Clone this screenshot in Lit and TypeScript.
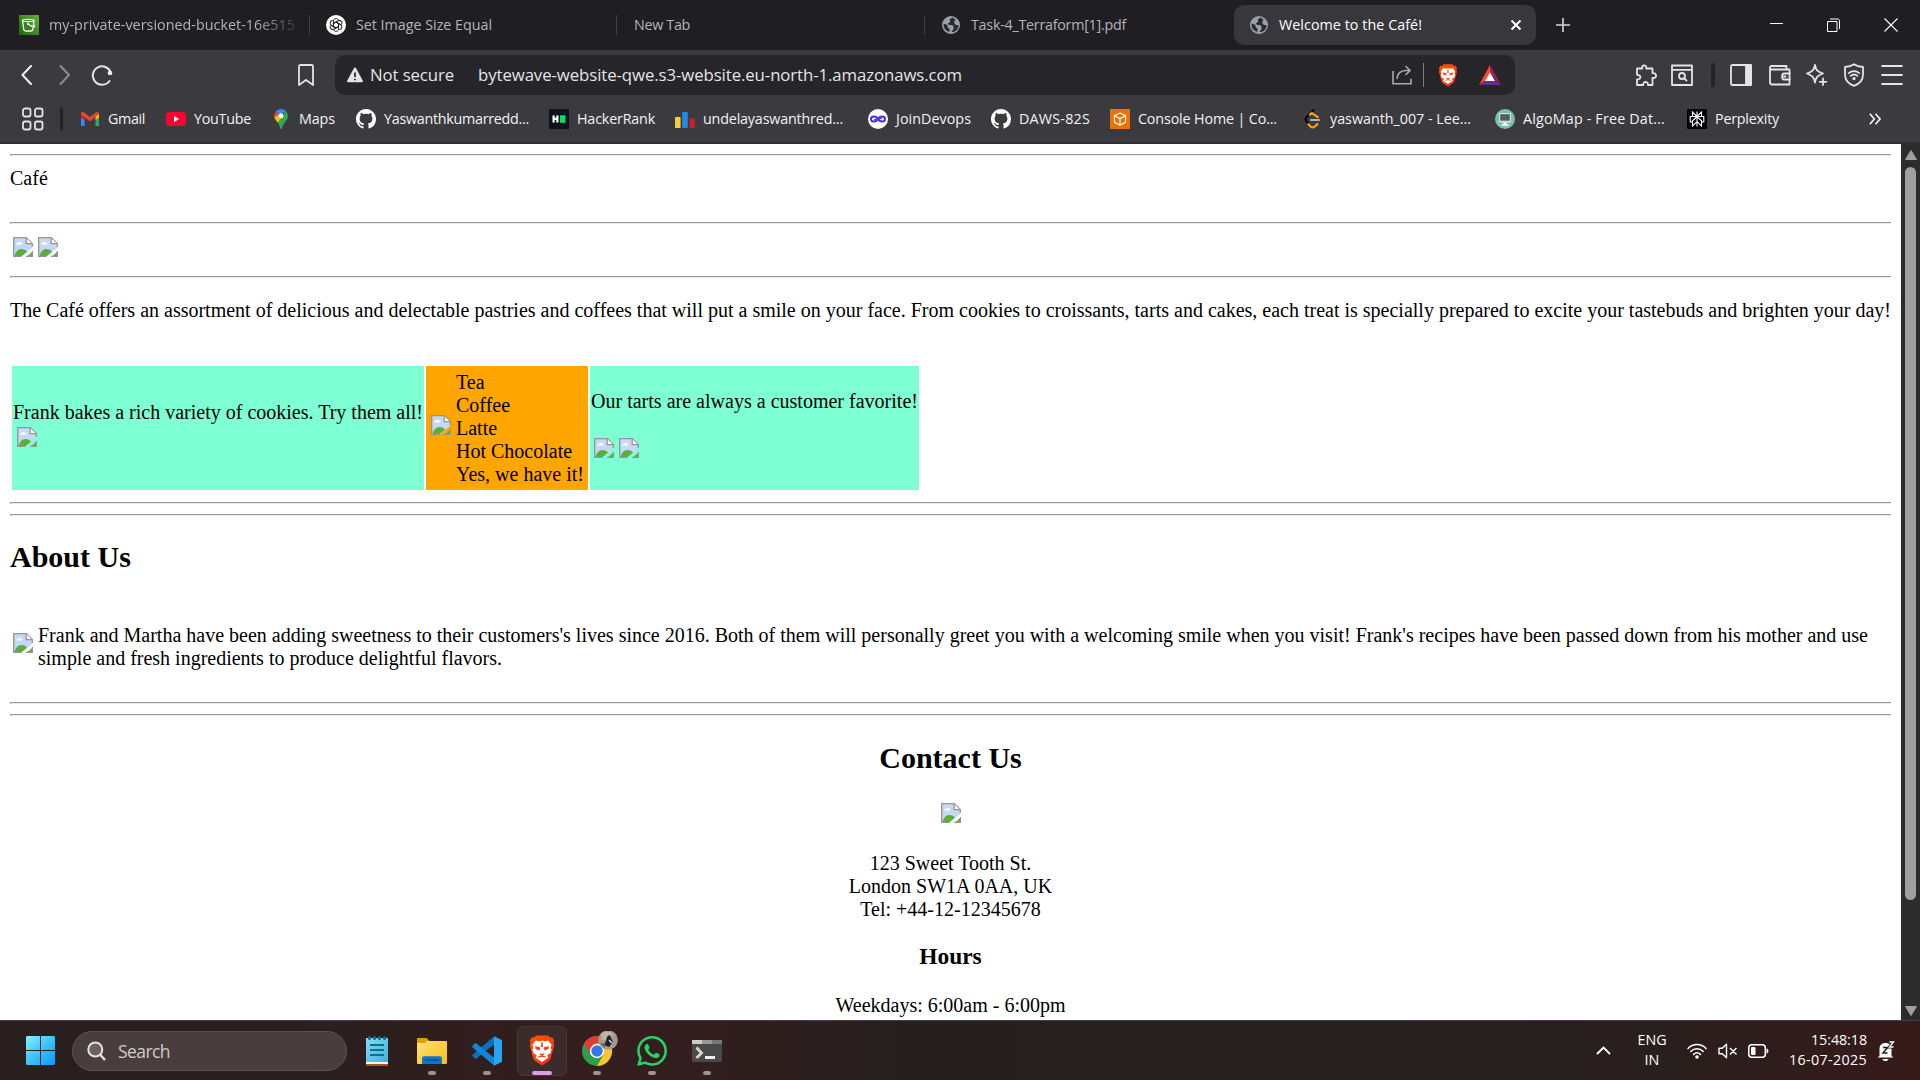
import { LitElement, html, css, svg } from "lit";
import { customElement, property } from "lit/decorators.js";

/** A single line of text tracked so that it fills an exact width. */
@customElement("fit-text")
class FitText extends LitElement {
  @property({ type: Number }) w = 0;
  @property() text = "";
  static styles = css`
    :host { display: block; white-space: pre; flex: none; }
    span { display: inline-block; }
  `;
  render() {
    return html`<span>${this.text}</span>`;
  }
  firstUpdated() {
    const span = this.renderRoot.querySelector("span") as HTMLElement;
    const natural = span.getBoundingClientRect().width;
    span.style.letterSpacing = `${(this.w - natural) / this.text.length}px`;
  }
}

const t = (text: string, w: number) => html`<fit-text .text=${text} .w=${w}></fit-text>`;
const ic = (w: number, h: number, box: string, body: unknown) =>
  html`<svg width=${w} height=${h} viewBox=${box} fill="none">${body}</svg>`;

const LION = svg`
  <path d="M5 2.6 7 .4h12l2 2.2 2.4-.2 1.8 3.4-.8 2.4.8 2.2-3.4 12.6a6 6 0 0 1-2 3L13 30.5 6.200 26a6 6 0 0 1-2-3L.8 10.400l.8-2.200-.8-2.400 1.800-3.400z" fill="url(#lg)"/>
  <path d="M13 5.600l3.200.800 3-.900 3.400 4.200-1 3.300 1 1.400-1.100 3.800-3.200 1.900 1 2.700L13 27l-6.300-4.200 1-2.700-3.200-1.900-1.100-3.800 1-1.400-1-3.300 3.400-4.200 3 .9z" fill="#fff"/>
  <path d="M6.200 11.300l4.700 1 .3 1.500-1.100 1.600-3.700-1.700zM19.800 11.300l-4.700 1-.3 1.500 1.100 1.600 3.700-1.700zM10.500 18.200l2.500.9 2.500-.9-.3 1.300-2.200 1.400-2.200-1.400zM8.800 21.600l4.200-1.100 4.200 1.100-1 .9-3.200-.8-3.200.8zM12.300 7.500h1.400l.3 4.500h-2z" fill="#fb3d12"/>
  <defs><linearGradient id="lg" x1="0" y1="0" x2="1" y2="1"><stop stop-color="#ff5500"/><stop offset=".6" stop-color="#ff4010"/><stop offset="1" stop-color="#f52008"/></linearGradient></defs>`;

const brokenImage = () => html`<svg class="broken" width="20" height="20" viewBox="0 0 20 20" fill="none">
  <path d="M1 1h12.500L19 6.500V11L9 19.500H1z" fill="#c6d8f6"/>
  <path d="M3.200 7.400c0-1.300 1-1.900 2-1.700.6-1.500 2.900-1.300 3.200.2 1.300-.1 1.600 1.500.2 1.500z" fill="#fff"/>
  <path d="M1.500 19.300c.8-4.500 3.600-7.300 7-7.300 2.400 0 4.300.9 5.600 2.600L8.500 19.300z" fill="#5aaf3c"/>
  <path d="M14 19.500l5-4.500v4.500z" fill="#5aaf3c"/>
  <path d="M.7 20V.7h12.600l6 5.800V10M.5 19.400h8M19.400 14v5.400H13" stroke="#959595" stroke-width="1.300"/>
  <path d="M13.200 1v5.600h5.600" stroke="#959595" stroke-width="1.300" fill="#fff"/></svg>`;

const globe = ic(18, 18, "0 0 18 18", svg`<circle cx="9" cy="9" r="9" fill="#9aa0a6"/>
  <path d="M10.500 1.600 7.700 3.500 8.200 6 5.900 7.300 7 9h3.200l1.500 1.900-.3 2.300-2 2.900c4.500.3 7.500-3.500 7-7.100h-2.500l-1.700-2 .4-2.300 1-.6c-1-1.500-2.900-2.300-4.100-2.500zM1.700 7.500c-.5 4.200 1.500 7 5.500 8.400l.5-2.700-2.200-2.300V9z" fill="#2a2b2f"/>`);

const github = ic(20, 20, "0 0 16 16", svg`<path fill="#fff" d="M8 0C3.580 0 0 3.580 0 8c0 3.540 2.290 6.530 5.470 7.590.4.070.55-.17.55-.38 0-.19-.01-.82-.01-1.490-2.010.37-2.530-.49-2.690-.94-.09-.23-.48-.94-.82-1.130-.28-.15-.68-.52-.01-.53.63-.01 1.080.58 1.230.82.72 1.210 1.870.87 2.330.66.07-.52.28-.87.51-1.070-1.780-.2-3.640-.89-3.640-3.950 0-.87.31-1.590.82-2.150-.08-.2-.36-1.020.08-2.120 0 0 .67-.21 2.200.82.64-.18 1.320-.27 2-.27s1.360.09 2 .27c1.530-1.040 2.200-.82 2.200-.82.44 1.100.16 1.920.08 2.120.51.56.82 1.270.82 2.150 0 3.070-1.870 3.750-3.650 3.950.29.25.54.73.54 1.480 0 1.070-.01 1.930-.01 2.200 0 .21.15.46.55.38A8.010 8.010 0 0 0 16 8c0-4.420-3.580-8-8-8z"/>`);

const s3 = ic(20, 20, "0 0 20 20", svg`<path d="M0 0h20v20H0z" fill="url(#s3g)"/>
  <path d="M3.500 5.500c0-1.700 11.500-1.700 11.500 0L13.700 15c-.4 1.500-8.200 1.500-8.800 0zM3.500 5.500c1 1.500 10.500 1.500 11.500 0M9 9l4 2.500c3 1 3.500 0 1.500-2" stroke="#fff" stroke-width="1.200"/><circle cx="9" cy="9" r="1" fill="#fff"/>
  <defs><linearGradient id="s3g" x1="0" y1="1" x2="1" y2="0"><stop stop-color="#1b660f"/><stop offset="1" stop-color="#6cae3e"/></linearGradient></defs>`);

const gpt = ic(20, 20, "0 0 20 20", svg`<circle cx="10" cy="10" r="10" fill="#fff"/><g stroke="#202024" stroke-width="1">
  ${[0, 60, 120, 180, 240, 300].map((a) => svg`<path transform="rotate(${a} 10 10)" d="M7.400 11.500V6c0-2.600 3.700-3.300 4.900-1.100M7.400 8.600l3.400-2"/>`)}</g>`);

const tabs = [
  { icon: s3, text: "my-private-versioned-bucket-16e515", w: 246, cls: "fade" },
  { icon: gpt, text: "Set Image Size Equal", w: 136, cls: "sep" },
  { icon: null, text: "New Tab", w: 56, cls: "sep bare" },
  { icon: globe, text: "Task-4_Terraform[1].pdf", w: 155, cls: "sep bare globe" },
];

const bookmarks = [
  { text: "Gmail", w: 37, icon: ic(20, 20, "0 0 20 20", svg`<path d="M1 4v13h3.500V9z" fill="#4285f4"/><path d="M19 4v13h-3.500V9z" fill="#34a853"/><path d="M1 4.500 4.500 7v4L1 8.500z" fill="#c5221f"/><path d="M15.500 7 19 4.500v4L15.500 11z" fill="#fbbc04"/><path d="M1.500 3.200c1-.6 2-.2 2.600.3L10 8l5.900-4.500c1.300-1 3.100 0 3.100 1.600L10 12.500 1 5.500c0-1 0-1.800.5-2.300z" fill="#ea4335"/>`) },
  { text: "YouTube", w: 57, icon: ic(20, 20, "0 0 20 20", svg`<rect y="3" width="20" height="14" rx="3.500" fill="#ff0033"/><path d="M8 7v6l5.200-3z" fill="#fff"/>`) },
  { text: "Maps", w: 36, icon: ic(20, 20, "0 0 20 20", svg`<path d="M10 0a7 7 0 0 0-5.400 2.500L10 7l4.800-5C13.500.8 12 0 10 0z" fill="#4285f4"/><path d="M4.600 2.500A7 7 0 0 0 3.600 9L10 7z" fill="#ea4335"/><path d="M3.400 8.400c.8 2.300 2.300 3.600 3.500 5.300L13 6.500 10 4z" fill="#fbbc04"/><path d="M14.800 2c3.300 4 2 8 .2 10-2 2.500-3.300 4-4 7.200-.3 1.100-1.600 1.100-1.900 0-.4-2.200-1.200-3.900-2.200-5.500z" fill="#34a853"/><circle cx="10" cy="6.900" r="2.400" fill="#fff"/>`) },
  { text: "Yaswanthkumarredd...", w: 145, icon: github },
  { text: "HackerRank", w: 78, icon: ic(20, 20, "0 0 20 20", svg`<path d="M0 0h20v20H0z" fill="#0e141e"/><path d="M3.500 6.500h2.200v2.300h1.600V6.500h2.200v7H7.300v-2.600H5.700v2.600H3.500z" fill="#fff"/><path d="M11 6.300h5.500v7.400H11z" fill="#05e36a"/>`) },
  { text: "undelayaswanthred...", w: 140, icon: ic(20, 20, "0 0 20 20", svg`<rect y="8" width="5.600" height="11" rx="1" fill="#f8cb45"/><rect x="7.200" y="3" width="5.600" height="16" rx="1" fill="#1e8ee0"/><rect x="14.400" y="9.500" width="5.600" height="9.500" rx="1" fill="#c3202b"/>`) },
  { text: "JoinDevops", w: 75, icon: ic(20, 20, "0 0 20 20", svg`<circle cx="10" cy="10" r="10" fill="#fff"/><path d="M10 10c-2-3.500-7-3.300-7 0s5 3.500 7 0 7-3.300 7 0-5 3.500-7 0z" stroke="#4d2de0" stroke-width="2"/><path d="M6 10.400h3M11 9.600h3" stroke="#4d2de0"/>`) },
  { text: "DAWS-82S", w: 71, icon: github },
  { text: "Console Home | Co...", w: 139, icon: ic(20, 20, "0 0 20 20", svg`<path d="M0 0h20v20H0z" fill="#ed7100"/><path d="m10 4 5.600 2.700v6.500L10 16.300l-5.600-3.100V6.700zM4.400 6.700 10 9.600l5.600-2.900M10 9.600v6.700" stroke="#fff" stroke-width="1.100"/>`) },
  { text: "yaswanth_007 - Lee...", w: 141, icon: ic(20, 20, "0 0 20 20", svg`<path d="M11.500 1 4.600 8.300c-1.200 1.300-1.200 3 0 4.300l2.200 2.400" stroke="#0a0a0a" stroke-width="2.200" stroke-linecap="round"/><path d="m8 5.500 1.800-1.300 6 4M6.500 15.200l2.300 2.500c1 1 2.600 1 3.600 0l3-2.600" stroke="#ffa116" stroke-width="2.200" stroke-linecap="round"/><path d="M9 11h8" stroke="#b3b3b3" stroke-width="2.200" stroke-linecap="round"/>`) },
  { text: "AlgoMap - Free Dat...", w: 142, icon: ic(20, 20, "0 0 20 20", svg`<circle cx="10" cy="10" r="10" fill="#76c2af"/><rect x="4" y="4" width="12" height="9.500" rx="1" fill="#e0e0d1"/><rect x="5.200" y="5.200" width="9.600" height="6.500" fill="#4f5d73"/><path d="M8.500 13.500h3l.6 2.500H7.900zM6.500 15.500h7v1.200h-7z" fill="#fff"/>`) },
  { text: "Perplexity", w: 64, icon: ic(20, 20, "0 0 20 20", svg`<rect width="20" height="20" rx="1.500" fill="#000"/><path d="M10 2.500v15M10 7.500 5.500 3v4.500h9V3zM10 7.500l-4.500 4.300V17l4.500-4.300 4.500 4.300v-5.200zM5.500 13H3.200V7.500h2.300M14.500 13h2.300V7.500h-2.300" stroke="#fff" stroke-width="1.100"/>`) },
];

const chevron = (d: string, o = 1) => ic(11, 20, "0 0 11 20", svg`<path d=${d} stroke="#f0f0f2" stroke-opacity=${o} stroke-width="2" stroke-linecap="round" stroke-linejoin="round"/>`);
const line = (w: number, h: number, body: unknown) =>
  html`<svg width=${w} height=${h} viewBox="0 0 ${w} ${h}" fill="none" stroke="#e3e3e8" stroke-width="1.800" stroke-linejoin="round" stroke-linecap="round">${body}</svg>`;

@customElement("app-root")
class AppRoot extends LitElement {
  static styles = css`
    :host { display: block; }
    * { box-sizing: border-box; }
    svg { display: block; flex: none; }
    .screen { width: 1920px; height: 1080px; overflow: hidden; display: flex; flex-direction: column; background: #fff; }
    .chrome { font: 14.3px/20px "Open Sans", "Noto Sans", sans-serif; color: #f2f2f4; flex: none; }

    .tabs { height: 50px; background: #1f1f23; display: grid; align-items: center;
      grid-template-columns: 290px 307px 308px 310px 302px 233px 58px 57px 36px; padding-left: 19px; color: #b4b4b8; }
    .tab { display: flex; align-items: center; gap: 10px; height: 20px; min-width: 0; }
    .tab.sep { border-left: 1px solid #404045; padding-left: 16px; }
    .tab.bare { padding-left: 17px; }
    .tab.fade { -webkit-mask-image: linear-gradient(90deg, #000 236px, transparent 284px); overflow: hidden; }
    .tab.globe { gap: 11px; }
    .active { height: 40px; background: #37373c; border-radius: 10px; padding: 0 14px 0 16px; display: flex; align-items: center; gap: 11px; color: #fff; }
    .grow { flex: 1; }
    .plus { padding-left: 20px; }

    .tools { height: 50px; background: #3b3b3f; display: grid; align-items: center;
      grid-template-columns: 38px 32px 207px 37px 1180px 120px 36px 40px 19px 39px 37px 38px 37px 38px; padding-left: 21px; }
    .url { height: 40px; border-radius: 10px; background: #25252a; font-size: 16.800px; line-height: 22px; display: grid; align-items: center;
      grid-template-columns: 23px 108px 914px 31px 15px 41px 30px; padding-left: 12px; color: #e4e4e8; }
    .vbar { width: 4px; height: 24px; border-radius: 2px; background: #242428; }
    .thin { width: 1px; height: 24px; background: #7c7c82; }

    .marks { height: 44px; background: #3b3b3f; border-bottom: 2px solid #2e2e32; display: grid; align-items: center;
      grid-template-columns: 38px 20px 86px 105px 85px 193px 126px 193px 123px 119px 192px 193px 192px 182px 20px; padding: 0 0 4px 22px; }
    .mark { display: flex; align-items: center; gap: 8px; }
    .marks .vbar { width: 3px; height: 24px; }

    .view { flex: 1; min-height: 0; display: flex; overflow: hidden; }
    .doc { width: 1901px; padding: 10px 10px 0 10px; font: 20px/23px "Liberation Serif", "Times New Roman", serif; color: #000; overflow: hidden; }
    .rule { height: 2px; border-top: 1px solid #989898; border-bottom: 1px solid #ececec; border-left: 1px solid #989898; }
    .gap { height: 10px; }
    .cafe { height: 66px; padding-top: 11px; }
    .pics { height: 52px; padding: 13px 0 0 3px; display: flex; gap: 5px; }
    .intro { padding-top: 21px; height: 88px; white-space: nowrap; }
    .cells { display: grid; grid-template-columns: 412px 162px 329px; gap: 2px; padding-left: 2px; height: 124px; margin-bottom: 12px; }
    .aqua { background: #7fffd4; }
    .orange { background: #ffa500; display: flex; padding: 5px 0 0 5px; gap: 5px; white-space: nowrap; }
    .orange .broken { margin-top: 44px; }
    .c1 { padding: 35px 0 0 1px; }
    .c1 .broken { margin: 3px 0 0 4px; }
    .c3 { padding: 24px 0 0 1px; }
    .c3 .row { display: flex; gap: 5px; padding: 25px 0 0 3px; }
    h2, h3, p { margin: 0; }
    h2 { font-size: 30px; line-height: 34px; }
    h3 { font-size: 23.400px; line-height: 27px; }
    .about { padding-top: 24px; height: 107px; }
    .story { display: flex; gap: 5px; padding-left: 3px; height: 79px; white-space: nowrap; }
    .story .broken { margin-top: 10px; }
    .story .lines { padding-top: 1px; }
    .contact { display: flex; flex-direction: column; align-items: center; padding-top: 25px; text-align: center; }
    .contact .broken { margin: 28px 0 29px 1px; }
    .contact h3 { margin: 22px 0 24px; }

    .scroll { width: 19px; background: #2c2c2c; display: flex; flex-direction: column; align-items: center; padding: 6px 0 4px; }
    .thumb { width: 11px; height: 733px; margin-top: 7px; border-radius: 6px; background: #9f9f9f; }

    .task { height: 60px; flex: none; border-top: 1px solid #473f3f; font: 14.300px/20px "Open Sans", "Noto Sans", sans-serif; color: #fff;
      display: grid; align-items: center; padding-left: 26px;
      background: linear-gradient(90deg, #281f1e 0, #2a1f1f 300px, #341d1d 560px, #331e1e 680px, #271f1f 900px, #281f1e 1650px, #331c1b 1850px, #351a19 1920px);
      grid-template-columns: 46px 280px 55px 55px 55px 55px 55px 55px 50px 864px 42px 49px 31px 30px 41px 78px 30px; }
    .pill { width: 275px; height: 40px; border-radius: 20px; background: #493d3d; border: 1px solid #5e5353; display: flex; align-items: center; gap: 12px; padding-left: 14px; font-size: 17.500px; color: #d2cccc; }
    .app { width: 50px; height: 50px; display: flex; flex-direction: column; align-items: center; justify-content: flex-end; gap: 3px; padding-bottom: 1px; border-radius: 6px; }
    .slot { height: 34px; display: flex; align-items: center; justify-content: center; }
    .dot { width: 8px; height: 4px; border-radius: 2px; background: #9a9393; flex: none; }
    .idle .dot { background: transparent; }
    .on { background: #3b2b2b; border: 1px solid #463636; padding-bottom: 0; }
    .on .dot { width: 20px; background: #dc9ee6; }
    .col { display: flex; flex-direction: column; margin-top: -1px; }
    .col.mid { align-items: center; width: 30px; margin-left: -1px; }
    .col.end { align-items: flex-end; }
  `;

  private app(icon: unknown, cls = "") {
    return html`<div class="app ${cls}"><div class="slot">${icon}</div><div class="dot"></div></div>`;
  }

  render() {
    return html`<div class="screen">
      <div class="chrome">
        <div class="tabs">
          ${tabs.map((b) => html`<div class="tab ${b.cls}">${b.icon}${t(b.text, b.w)}</div>`)}
          <div class="active">${globe}${t("Welcome to the Café!", 143)}<div class="grow"></div>
            ${ic(12, 12, "0 0 12 12", svg`<path d="m1.500 1.500 9 9m0-9-9 9" stroke="#fff" stroke-width="2"/>`)}</div>
          <div class="plus">${ic(14, 14, "0 0 14 14", svg`<path d="M7 0v14M0 7h14" stroke="#d6d6da" stroke-width="1.600"/>`)}</div>
          ${ic(14, 14, "0 0 14 14", svg`<path d="M1 5.500h13" stroke="#fff"/>`)}
          ${ic(14, 14, "0 0 14 14", svg`<path d="M.5 3.500h9.500V13.500H.5z" stroke="#fff"/><path d="M3 1h7.500c1.200 0 2 .8 2 2v8" stroke="#fff"/>`)}
          ${ic(14, 14, "0 0 14 14", svg`<path d="m.5.5 13 13m0-13-13 13" stroke="#fff" stroke-width="1.100"/>`)}
        </div>
        <div class="tools">
          ${chevron("M10 1 1.500 10 10 19")}
          ${chevron("m1.500 1 8.500 9-8.500 9", 0.45)}
          ${line(22, 22, svg`<path d="M18.500 17A9.200 9.200 0 1 1 20 9.500" stroke-width="2"/><circle cx="19" cy="9" r="2.300" fill="#f0f0f2" stroke="none"/>`)}
          ${line(16, 22, svg`<path d="M1 2.500C1 1.600 1.600 1 2.500 1h11c.9 0 1.500.6 1.500 1.500V21l-7-5-7 5z"/>`)}
          <div class="url">
            ${ic(16, 16, "0 0 16 16", svg`<path d="M8 .5c.5 0 .9.300 1.100.7l6.600 12.400c.4.800 0 1.600-.9 1.600H1.200c-.9 0-1.300-.8-.9-1.600L6.900 1.200C7.100.8 7.500.5 8 .5z" fill="#e4e4e8"/><path d="M8 5.500v4.500M8 11.700v1.600" stroke="#25252a" stroke-width="1.700"/>`)}
            ${t("Not secure", 84)}
            ${t("bytewave-website-qwe.s3-website.eu-north-1.amazonaws.com", 484)}
            ${ic(20, 20, "0 0 20 20", svg`<path d="M1 6v12.800h18v-5M5 14c0-5 3.500-8.500 8.500-8.500h4.500M13.500 1l4.500 4.500-4.500 4.500" stroke="#a9a9af" stroke-width="1.600"/>`)}
            <div class="thin"></div>
            ${ic(20, 23, "0 0 26 31", LION)}
            ${ic(22, 20, "0 0 22 20", svg`<path d="M11 0 0 20l11-7.500z" fill="#ff4724"/><path d="M11 0v9l11 11z" fill="#9e1f63"/><path d="M0 20h22l-6-5H7z" fill="#662d91"/><path d="m11 7.500-5 8.500h10z" fill="#fff"/>`)}
          </div>
          <div></div>
          ${line(22, 22, svg`<path d="M2 4.500h5.300C6 .3 12 .3 11.300 4.500H17.500v4.700c4.800-.8 4.800 5.600 0 4.700V21H13c.4-4-5.200-4-4.800 0H2v-5.500c4.500.4 4.500-5 0-4.700z"/>`)}
          ${line(22, 22, svg`<path d="M1 1.500h20V21H1zM1 5.800h20"/><circle cx="11" cy="12" r="3"/><path d="m13.300 14.300 2.200 2.200"/>`)}
          <div class="vbar"></div>
          ${line(22, 22, svg`<rect x="1" y="1" width="20" height="20" rx="1.500"/><path d="M16 1h5v20h-5z" fill="#e3e3e8"/>`)}
          ${line(22, 22, svg`<path d="M17.500 5.500V2H2.500C.5 2 .5 5.500 2.500 5.500H20.500V20.500H3C1.500 20.500 1 19.500 1 18.500V4M21 9.500h-6c-2.500 0-2.500 6 0 6h6M15 12.500h1.500"/>`)}
          ${line(22, 22, svg`<path d="M9 1.500c1 5 2 6.500 8 8.500-6 2-7 4-8 9-1-5-2.500-7-8-9 5.500-2 7-3.500 8-8.500z" transform="translate(0 -.5)"/><path d="M17 14.500v6.500M13.800 17.800h6.500"/>`)}
          ${line(20, 24, svg`<path d="M10 1.200c2.500 1.800 5.500 2.500 9 2.800v7.500c0 5.500-4 9.500-9 11.300C5 21 1 17 1 11.500V4c3.500-.3 6.500-1 9-2.800z"/><path d="M4.800 10.200c3-2.700 7.400-2.700 10.400 0M6.600 12.900c2-1.700 4.800-1.700 6.800 0"/><circle cx="10" cy="15.600" r=".8"/>`)}
          ${line(22, 20, svg`<path d="M1 1h20M1 10h20M1 19h20"/>`)}
        </div>
        <div class="marks">
          ${line(22, 24, svg`<rect x="1" y="1.500" width="7.500" height="8" rx="2"/><rect x="13" y="1.500" width="7.500" height="8" rx="2"/><rect x="1" y="14.500" width="7.500" height="8" rx="2"/><rect x="13" y="14.500" width="7.500" height="8" rx="2"/>`)}
          <div class="vbar"></div>
          ${bookmarks.map((b) => html`<div class="mark">${b.icon}${t(b.text, b.w)}</div>`)}
          ${ic(12, 12, "0 0 12 12", svg`<path d="m.8.8 4.500 5.200-4.500 5.200M6.500.8 11 6l-4.500 5.200" stroke="#f0f0f2" stroke-width="1.700"/>`)}
        </div>
      </div>

      <div class="view">
        <div class="doc">
          <div class="rule"></div>
          <p class="cafe">Café</p>
          <div class="rule"></div>
          <div class="pics">${brokenImage()}${brokenImage()}</div>
          <div class="rule"></div>
          <p class="intro">${t("The Café offers an assortment of delicious and delectable pastries and coffees that will put a smile on your face. From cookies to croissants, tarts and cakes, each treat is specially prepared to excite your tastebuds and brighten your day!", 1881)}</p>
          <div class="cells">
            <div class="aqua c1">${t("Frank bakes a rich variety of cookies. Try them all!", 410)}${brokenImage()}</div>
            <div class="orange">${brokenImage()}<p>Tea<br />Coffee<br />Latte<br />Hot Chocolate<br />Yes, we have it!</p></div>
            <div class="aqua c3">${t("Our tarts are always a customer favorite!", 327)}<div class="row">${brokenImage()}${brokenImage()}</div></div>
          </div>
          <div class="rule"></div><div class="gap"></div><div class="rule"></div>
          <div class="about"><h2>About Us</h2></div>
          <div class="story">${brokenImage()}<div class="lines">
            ${t("Frank and Martha have been adding sweetness to their customers's lives since 2016. Both of them will personally greet you with a welcoming smile when you visit! Frank's recipes have been passed down from his mother and use", 1830)}
            ${t("simple and fresh ingredients to produce delightful flavors.", 464)}</div></div>
          <div class="rule"></div><div class="gap"></div><div class="rule"></div>
          <div class="contact">
            <h2>Contact Us</h2>
            ${brokenImage()}
            <p>123 Sweet Tooth St.<br />London SW1A 0AA, UK<br />Tel: +44-12-12345678</p>
            <h3>Hours</h3>
            <p>Weekdays: 6:00am - 6:00pm</p>
          </div>
        </div>
        <div class="scroll">
          ${ic(12, 10, "0 0 12 10", svg`<path d="M6 .5 11.500 9.500H.5z" fill="#9f9f9f" stroke="#9f9f9f" stroke-linejoin="round"/>`)}
          <div class="thumb"></div><div class="grow"></div>
          ${ic(12, 10, "0 0 12 10", svg`<path d="M6 9.500 11.500.5H.5z" fill="#9f9f9f" stroke="#9f9f9f" stroke-linejoin="round"/>`)}
        </div>
      </div>

      <div class="task">
        ${ic(29, 29, "0 0 29 29", svg`<path d="M1 0h13v14H0V1zM15 0h13l1 1v13H15zM0 15h14v14H1l-1-1zM15 15h14v13l-1 1H15z" fill="url(#wg)"/><defs><linearGradient id="wg" x1="0" y1="0" x2="1" y2="1"><stop stop-color="#7ff4ff"/><stop offset=".5" stop-color="#3fc3fb"/><stop offset="1" stop-color="#0796ff"/></linearGradient></defs>`)}
        <div class="pill">${ic(19, 20, "0 0 19 20", svg`<circle cx="8.300" cy="8.500" r="7" stroke="#e5e0e0" stroke-width="2" fill="#6a6161"/><path d="m13 13.500 5 5.500" stroke="#e5e0e0" stroke-width="2.500"/>`)}${t("Search", 52)}</div>
        ${this.app(ic(22, 30, "0 0 22 30", svg`<path d="M0 24h22v6H0z" fill="#b25410"/><path d="M0 24h22v4H0z" fill="#f3f3f3"/><path d="M0 2h22v24H0z" fill="url(#ng)"/><g fill="#0a6e96"><rect x="4" y="8" width="14" height="2"/><rect x="4" y="13" width="14" height="2"/><rect x="4" y="18" width="14" height="2"/><rect x="2" width="3" height="4" rx="1.500"/><rect x="7" width="3" height="4" rx="1.500"/><rect x="12" width="3" height="4" rx="1.500"/><rect x="17" width="3" height="4" rx="1.500"/></g><defs><linearGradient id="ng" x1="0" y1="0" x2="1" y2="1"><stop stop-color="#86dcf2"/><stop offset="1" stop-color="#3fb2d2"/></linearGradient></defs>`), "idle")}
        ${this.app(ic(30, 28, "0 0 30 28", svg`<path d="M0 2c0-.6.400-1 1-1h8.500l3.500 3.500L9 8H0z" fill="#dea000"/><path d="M10 4h19c.6 0 1 .4 1 1v21c0 .6-.4 1-1 1H1c-.6 0-1-.4-1-1V6h8z" fill="url(#fg)"/><path d="M5 27v-5.500c0-1.400.8-2.200 2.200-2.200h15.600c1.400 0 2.200.8 2.200 2.200V27z" fill="#0f74cc"/><path d="M8 23h14" stroke="#0a4d92" stroke-width="1.500"/><defs><linearGradient id="fg" x1="0" y1="0" x2="1" y2="1"><stop stop-color="#ffe17b"/><stop offset="1" stop-color="#fcbc13"/></linearGradient></defs>`))}
        ${this.app(ic(30, 30, "0 0 30 30", svg`<path d="M22.300.2v8L4.500 22.500c-.6.500-1.300.4-1.800-.1L.6 20.300c-.6-.6-.5-1.300 0-1.900z" fill="#0a70b8"/><path d="M22.300 29.800v-8L4.500 7.500c-.6-.5-1.300-.4-1.800.1L.6 9.700c-.6.6-.5 1.300 0 1.900z" fill="#1287d2"/><path d="M22 .3 28.800 3.500c.8.400 1.200 1 1.200 1.900v19.200c0 .9-.4 1.500-1.200 1.900L22 29.700z" fill="#27a5f2"/>`))}
        ${this.app(ic(26, 31, "0 0 26 31", LION), "on")}
        ${this.app(html`<svg width="42" height="40" viewBox="0 0 42 40" fill="none"><g transform="translate(6 5)"><circle cx="15" cy="15" r="15" fill="#2f9e4c"/><path d="M2 7.500A15 15 0 0 1 28 7.500H15L8.500 18.700z" fill="#e23c30"/><path d="M28 7.500A15 15 0 0 1 15 30l6.500-11.200L15 7.500z" fill="#fbc62b"/><circle cx="15" cy="15" r="7.200" fill="#fff"/><circle cx="15" cy="15" r="5.700" fill="#3478e8"/></g><g transform="translate(1 -1)"><circle cx="31" cy="10" r="9.800" fill="#a59c8e"/><path d="M24 4c4-3 9-3 12 0l-3 5-8 1z" fill="#beb5a7"/><path d="M30 7c2-3 4-2 4 1l2 4-4 5-5-2 2-4z" fill="#20222e"/><path d="m32 10 3 3" stroke="#d5d5e0" stroke-width="1.500"/><path d="m23 13 5 1v4z" fill="#6c5348"/></g></svg>`)}
        ${this.app(ic(30, 30, "0 0 24 24", svg`<path fill="#25d366" d="M17.472 14.382c-.297-.149-1.758-.867-2.030-.967-.273-.099-.471-.148-.67.150-.197.297-.767.966-.940 1.164-.173.199-.347.223-.644.075-.297-.150-1.255-.463-2.390-1.475-.883-.788-1.480-1.761-1.653-2.059-.173-.297-.018-.458.130-.606.134-.133.298-.347.446-.520.149-.174.198-.298.298-.497.099-.198.050-.371-.025-.520-.075-.149-.669-1.612-.916-2.207-.242-.579-.487-.500-.669-.510-.173-.008-.371-.010-.570-.010-.198 0-.520.074-.792.372-.272.297-1.040 1.016-1.040 2.479 0 1.462 1.065 2.875 1.213 3.074.149.198 2.096 3.200 5.077 4.487.709.306 1.262.489 1.694.625.712.227 1.360.195 1.871.118.571-.085 1.758-.719 2.006-1.413.248-.694.248-1.289.173-1.413-.074-.124-.272-.198-.570-.347zM12.050 0C5.500 0 .160 5.335.157 11.892c0 2.096.547 4.142 1.588 5.945L.057 24l6.305-1.654a11.882 11.882 0 0 0 5.683 1.448h.005c6.554 0 11.890-5.335 11.893-11.893A11.821 11.821 0 0 0 20.465 3.488 11.821 11.821 0 0 0 12.050 0zm0 21.785h-.004a9.870 9.870 0 0 1-5.031-1.378l-.361-.214-3.741.982.998-3.648-.235-.374a9.860 9.860 0 0 1-1.510-5.260c.001-5.450 4.436-9.884 9.888-9.884 2.640 0 5.122 1.030 6.988 2.898a9.825 9.825 0 0 1 2.893 6.994c-.003 5.450-4.437 9.884-9.885 9.884z"/>`))}
        ${this.app(ic(30, 22, "0 0 30 22", svg`<rect width="30" height="22" rx="1" fill="#4a4a4a"/><path d="M0 4h30V1c0-.6-.4-1-1-1H1C.4 0 0 .4 0 1z" fill="#999"/><path d="M0 4h10V0H1C.4 0 0 .4 0 1z" fill="#ccc"/><path d="M20 4h10V1c0-.6-.4-1-1-1h-9z" fill="#777"/><path d="m4.500 7.500 5 5.500-5 5" stroke="#d6d6d6" stroke-width="2.800"/><path d="M13 17.500h10" stroke="#fff" stroke-width="2.800"/>`))}
        <div></div>
        ${ic(15, 9, "0 0 15 9", svg`<path d="M1 8 7.500 1.500 14 8" stroke="#fff" stroke-width="1.900"/>`)}
        <div class="col mid">${t("ENG", 29)}${t("IN", 15)}</div>
        ${ic(20, 17, "0 0 20 17", svg`<g stroke="#fff" stroke-width="1.500" stroke-linecap="round"><path d="M1 6.500c5-5.200 13-5.200 18 0M3.800 9.500c3.500-3.600 8.900-3.600 12.400 0M6.600 12.400c2-2 4.800-2 6.800 0"/></g><circle cx="10" cy="15" r="1.800" fill="#fff"/>`)}
        ${ic(20, 16, "0 0 20 16", svg`<path d="M1 5.200h3.200L8.500 1.200v13.600l-4.300-4H1zM12 5l6.500 6.500m0-6.500L12 11.500" stroke="#fff" stroke-width="1.400" stroke-linejoin="round"/>`)}
        ${ic(21, 14, "0 0 21 14", svg`<rect x=".8" y=".8" width="16.500" height="12.400" rx="3" stroke="#fff" stroke-width="1.500"/><rect x="3" y="3" width="4.500" height="8" rx="1" fill="#fff"/><path d="M18.500 4.500c2.500 0 2.500 5 0 5z" fill="#fff"/>`)}
        <div class="col end">${t("15:48:18", 56)}${t("16-07-2025", 78)}</div>
        <div class="bell">${ic(30, 22, "0 0 30 22", svg`<path d="M12.500 16V9c0-4 2.500-6 6-6s6 2 6 6v7l2 1.500H10.500z" fill="#fff"/><path d="M15.500 19h6c-.6 2.700-5.400 2.700-6 0z" fill="#fff"/><path d="M16 7.500h4.500L16 13h4.500" stroke="#2c1b1b" stroke-width="1.500"/><path d="M22.500 2h4l-4 5h4" stroke="#2c1b1b" stroke-width="3"/><path d="M22.500 2h4l-4 5h4" stroke="#fff" stroke-width="1.300"/>`)}</div>
      </div>
    </div>`;
  }
}
